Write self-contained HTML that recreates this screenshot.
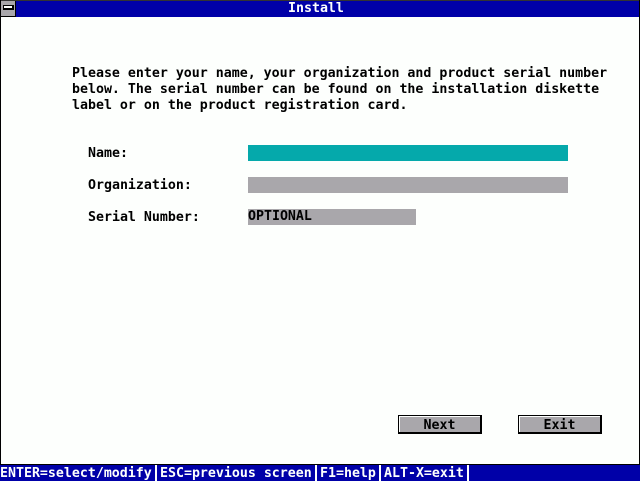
<!DOCTYPE html>
<html>
<head>
<meta charset="utf-8">
<style>
html,body{margin:0;padding:0;background:#fdfffd;}
#s{position:relative;width:640px;height:481px;overflow:hidden;background:#fdfffd;font-family:"DejaVu Sans Mono","Liberation Mono",monospace;font-size:13.28px;font-weight:bold;color:#000;}
.a{position:absolute;}
.t{position:absolute;white-space:pre;line-height:16px;height:16px;}
.w{color:#fdfffd;}
.btn{position:absolute;top:415px;width:81px;height:16px;background:#a9a7ab;border:1px solid #000;border-right:2px solid #000;border-bottom:2px solid #000;box-shadow:inset 1px 1px 0 #fdfffd;text-align:center;line-height:19px;box-sizing:content-box;}
</style>
</head>
<body>
<div id="s">
<div class="a" style="left:0;top:0;width:640px;height:1px;background:#333"></div>
<div class="a" style="left:0;top:1px;width:640px;height:16px;background:#0000a8"></div>
<div class="a" style="left:0;top:0;width:1px;height:465px;background:#000"></div>
<div class="a" style="left:639px;top:0;width:1px;height:465px;background:#000"></div>
<div class="a" style="left:1px;top:1px;width:14px;height:15px;background:#a9a7ab;border-right:1px solid #000;border-bottom:1px solid #000"></div>
<div class="a" style="left:3px;top:5px;width:8px;height:2px;background:#fdfffd;border:1px solid #000;border-bottom-width:2px;border-right-width:2px;box-sizing:content-box"></div>
<div class="t w" style="left:288px;top:1px">Install</div>

<div class="t" style="left:72px;top:66px">Please enter your name, your organization and product serial number</div>
<div class="t" style="left:72px;top:82px">below. The serial number can be found on the installation diskette</div>
<div class="t" style="left:72px;top:98px">label or on the product registration card.</div>

<div class="t" style="left:88px;top:146px">Name:</div>
<div class="a" style="left:248px;top:145px;width:320px;height:16px;background:#05a9ab"></div>
<div class="t" style="left:88px;top:178px">Organization:</div>
<div class="a" style="left:248px;top:177px;width:320px;height:16px;background:#a9a7ab"></div>
<div class="t" style="left:88px;top:210px">Serial Number:</div>
<div class="a" style="left:248px;top:209px;width:168px;height:16px;background:#a9a7ab"></div>
<div class="t" style="left:248px;top:209px">OPTIONAL</div>

<div class="btn" style="left:398px">Next</div>
<div class="btn" style="left:518px">Exit</div>

<div class="a" style="left:0;top:464px;width:640px;height:1px;background:#000"></div>
<div class="a" style="left:0;top:465px;width:640px;height:16px;background:#0000a8"></div>
<div class="t w" style="left:0;top:466px">ENTER=select/modify</div>
<div class="a" style="left:155px;top:465px;width:2px;height:16px;background:#fdfffd"></div>
<div class="t w" style="left:160px;top:466px">ESC=previous screen</div>
<div class="a" style="left:315px;top:465px;width:2px;height:16px;background:#fdfffd"></div>
<div class="t w" style="left:320px;top:466px">F1=help</div>
<div class="a" style="left:379px;top:465px;width:2px;height:16px;background:#fdfffd"></div>
<div class="t w" style="left:384px;top:466px">ALT-X=exit</div>
<div class="a" style="left:467px;top:465px;width:2px;height:16px;background:#fdfffd"></div>
</div>
</body>
</html>
